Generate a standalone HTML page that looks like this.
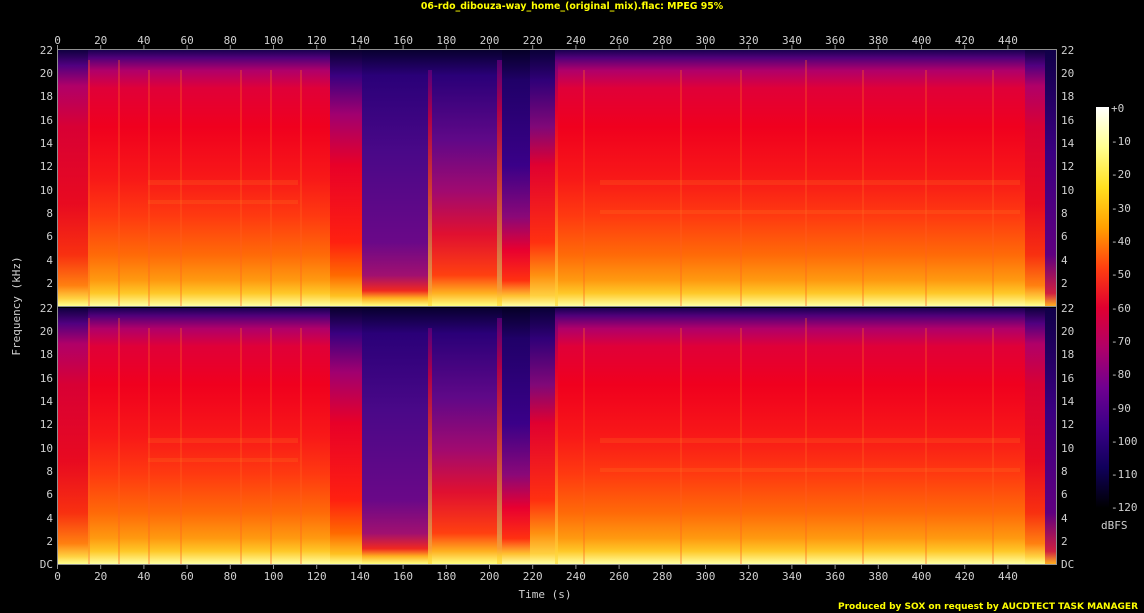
<!DOCTYPE html>
<html><head><meta charset="utf-8"><style>
html,body{margin:0;padding:0;background:#000;width:1144px;height:613px;overflow:hidden}
svg{display:block}
text{font-family:"DejaVu Sans Mono","Liberation Mono",monospace;font-size:11px;fill:#d0d0d0}
</style></head><body>
<svg width="1144" height="613" viewBox="0 0 1144 613" xmlns="http://www.w3.org/2000/svg">
<defs>
<linearGradient id="loud" x1="0" y1="0" x2="0" y2="1">
<stop offset="0" stop-color="#1a0050"/><stop offset="0.03" stop-color="#50007a"/><stop offset="0.08" stop-color="#b0006a"/><stop offset="0.15" stop-color="#e00038"/><stop offset="0.3" stop-color="#f0001e"/><stop offset="0.5" stop-color="#f81818"/><stop offset="0.65" stop-color="#ff3a10"/><stop offset="0.8" stop-color="#ff6a08"/><stop offset="0.9" stop-color="#ff9a10"/><stop offset="0.95" stop-color="#ffc828"/><stop offset="1" stop-color="#ffffa0"/>
</linearGradient>
<linearGradient id="loudA" x1="0" y1="0" x2="0" y2="1">
<stop offset="0" stop-color="#100040"/><stop offset="0.06" stop-color="#500080"/><stop offset="0.14" stop-color="#b00068"/><stop offset="0.3" stop-color="#d80034"/><stop offset="0.6" stop-color="#e80a20"/><stop offset="0.8" stop-color="#f83010"/><stop offset="0.92" stop-color="#ff8010"/><stop offset="0.97" stop-color="#ffd040"/><stop offset="1" stop-color="#ffff90"/>
</linearGradient>
<linearGradient id="trans" x1="0" y1="0" x2="0" y2="1">
<stop offset="0" stop-color="#0a0030"/><stop offset="0.1" stop-color="#3a0080"/><stop offset="0.25" stop-color="#a00070"/><stop offset="0.45" stop-color="#e80028"/><stop offset="0.75" stop-color="#ff2010"/><stop offset="0.88" stop-color="#ff6a00"/><stop offset="0.96" stop-color="#ffc020"/><stop offset="1" stop-color="#ffff90"/>
</linearGradient>
<linearGradient id="quiet" x1="0" y1="0" x2="0" y2="1">
<stop offset="0" stop-color="#080030"/><stop offset="0.1" stop-color="#2a0078"/><stop offset="0.4" stop-color="#4a0888"/><stop offset="0.75" stop-color="#6a0888"/><stop offset="0.88" stop-color="#a01070"/><stop offset="0.94" stop-color="#f02820"/><stop offset="0.97" stop-color="#ffb020"/><stop offset="1" stop-color="#ffff80"/>
</linearGradient>
<linearGradient id="quiet2" x1="0" y1="0" x2="0" y2="1">
<stop offset="0" stop-color="#080030"/><stop offset="0.1" stop-color="#2a0078"/><stop offset="0.35" stop-color="#600888"/><stop offset="0.55" stop-color="#a00a70"/><stop offset="0.72" stop-color="#e01030"/><stop offset="0.88" stop-color="#ff4010"/><stop offset="0.95" stop-color="#ffb020"/><stop offset="1" stop-color="#ffff80"/>
</linearGradient>
<linearGradient id="hole1" x1="0" y1="0" x2="0" y2="1">
<stop offset="0" stop-color="#060028"/><stop offset="0.12" stop-color="#200068"/><stop offset="0.45" stop-color="#3a0088"/><stop offset="0.65" stop-color="#8a0878"/><stop offset="0.78" stop-color="#e80030"/><stop offset="0.9" stop-color="#ff3010"/><stop offset="0.96" stop-color="#ffc030"/><stop offset="1" stop-color="#ffffa0"/>
</linearGradient>
<linearGradient id="hole2" x1="0" y1="0" x2="0" y2="1">
<stop offset="0" stop-color="#0a0038"/><stop offset="0.12" stop-color="#300078"/><stop offset="0.3" stop-color="#800878"/><stop offset="0.45" stop-color="#e00030"/><stop offset="0.75" stop-color="#ff3010"/><stop offset="0.88" stop-color="#ff9010"/><stop offset="0.96" stop-color="#ffd040"/><stop offset="1" stop-color="#ffffa0"/>
</linearGradient>
<linearGradient id="line" x1="0" y1="0" x2="0" y2="1">
<stop offset="0" stop-color="#6a0080"/><stop offset="0.2" stop-color="#e00030"/><stop offset="0.5" stop-color="#ff5010"/><stop offset="1" stop-color="#ffe040"/>
</linearGradient>
<linearGradient id="tail" x1="0" y1="0" x2="0" y2="1">
<stop offset="0" stop-color="#100048"/><stop offset="0.4" stop-color="#3a0080"/><stop offset="0.8" stop-color="#600080"/><stop offset="0.95" stop-color="#d02040"/><stop offset="1" stop-color="#ffb020"/>
</linearGradient>
<linearGradient id="cbar" x1="0" y1="0" x2="0" y2="1">
<stop offset="0" stop-color="#ffffff"/><stop offset="0.1" stop-color="#ffff90"/><stop offset="0.2" stop-color="#ffe020"/><stop offset="0.3" stop-color="#ffa000"/><stop offset="0.4" stop-color="#ff4010"/><stop offset="0.5" stop-color="#e00030"/><stop offset="0.6" stop-color="#b00068"/><stop offset="0.7" stop-color="#700090"/><stop offset="0.8" stop-color="#3a0088"/><stop offset="0.9" stop-color="#10005a"/><stop offset="1" stop-color="#000000"/>
</linearGradient>
<g id="panel">
<rect x="362" y="0" width="140" height="256" fill="url(#quiet)"/>
<rect x="58" y="0" width="30" height="256" fill="url(#loudA)"/>
<rect x="88" y="0" width="242" height="256" fill="url(#loud)"/>
<rect x="330" y="0" width="32" height="256" fill="url(#trans)"/>
<rect x="362" y="0" width="66" height="256" fill="url(#quiet)"/>
<rect x="432" y="0" width="65" height="256" fill="url(#quiet2)"/>
<rect x="502" y="0" width="28" height="256" fill="url(#hole1)"/>
<rect x="530" y="0" width="25" height="256" fill="url(#hole2)"/>
<rect x="555" y="0" width="470" height="256" fill="url(#loud)"/>
<rect x="1025" y="0" width="20" height="256" fill="url(#loudA)"/>
<rect x="1045" y="0" width="11" height="256" fill="url(#tail)"/>
<g fill="url(#line)" opacity="0.7">
<rect x="428" y="20" width="4" height="236"/><rect x="497" y="10" width="5" height="246"/>
<rect x="555" y="12" width="3" height="244"/>
</g>
<g fill="#ff6020" opacity="0.35">
<rect x="88" y="10" width="2" height="246"/><rect x="118" y="10" width="2" height="246"/><rect x="148" y="20" width="2" height="236"/><rect x="180" y="20" width="2" height="236"/><rect x="240" y="20" width="2" height="236"/><rect x="270" y="20" width="2" height="236"/><rect x="300" y="20" width="2" height="236"/>
<rect x="583" y="20" width="2" height="236"/><rect x="680" y="20" width="2" height="236"/><rect x="740" y="20" width="2" height="236"/><rect x="805" y="10" width="2" height="246"/><rect x="862" y="20" width="2" height="236"/><rect x="925" y="20" width="2" height="236"/><rect x="992" y="20" width="2" height="236"/>
</g>
<g fill="#ff8020" opacity="0.2">
<rect x="148" y="130" width="150" height="5"/><rect x="148" y="150" width="150" height="4"/><rect x="600" y="130" width="420" height="5"/><rect x="600" y="160" width="420" height="4"/>
</g>
</g>
</defs>
<text x="572" y="9" text-anchor="middle" style="font-family:'DejaVu Sans','Liberation Sans',sans-serif;font-size:9.4px;font-weight:bold;fill:#ffff00">06-rdo_dibouza-way_home_(original_mix).flac: MPEG 95%</text>
<use href="#panel" transform="translate(0,50)"/>
<use href="#panel" transform="translate(0,308)"/>
<rect x="57.5" y="49.5" width="999" height="515" fill="none" stroke="#909090" stroke-width="1"/>
<line x1="57.5" y1="306.5" x2="1056.5" y2="306.5" stroke="#909090"/>
<g stroke="#909090">
<path d="M57.5 45v4M100.7 45v4M143.9 45v4M187.1 45v4M230.3 45v4M273.5 45v4M316.7 45v4M359.9 45v4M403.1 45v4M446.3 45v4M489.5 45v4M532.7 45v4M575.9 45v4M619.1 45v4M662.3 45v4M705.5 45v4M748.7 45v4M791.9 45v4M835.1 45v4M878.3 45v4M921.5 45v4M964.7 45v4M1007.9 45v4"/>
<path d="M57.5 565v4M100.7 565v4M143.9 565v4M187.1 565v4M230.3 565v4M273.5 565v4M316.7 565v4M359.9 565v4M403.1 565v4M446.3 565v4M489.5 565v4M532.7 565v4M575.9 565v4M619.1 565v4M662.3 565v4M705.5 565v4M748.7 565v4M791.9 565v4M835.1 565v4M878.3 565v4M921.5 565v4M964.7 565v4M1007.9 565v4"/>
</g>
<g text-anchor="middle">
<text x="57.5" y="44">0</text><text x="100.7" y="44">20</text><text x="143.9" y="44">40</text><text x="187.1" y="44">60</text><text x="230.3" y="44">80</text><text x="273.5" y="44">100</text><text x="316.7" y="44">120</text><text x="359.9" y="44">140</text><text x="403.1" y="44">160</text><text x="446.3" y="44">180</text><text x="489.5" y="44">200</text><text x="532.7" y="44">220</text><text x="575.9" y="44">240</text><text x="619.1" y="44">260</text><text x="662.3" y="44">280</text><text x="705.5" y="44">300</text><text x="748.7" y="44">320</text><text x="791.9" y="44">340</text><text x="835.1" y="44">360</text><text x="878.3" y="44">380</text><text x="921.5" y="44">400</text><text x="964.7" y="44">420</text><text x="1007.9" y="44">440</text>
<text x="57.5" y="580">0</text><text x="100.7" y="580">20</text><text x="143.9" y="580">40</text><text x="187.1" y="580">60</text><text x="230.3" y="580">80</text><text x="273.5" y="580">100</text><text x="316.7" y="580">120</text><text x="359.9" y="580">140</text><text x="403.1" y="580">160</text><text x="446.3" y="580">180</text><text x="489.5" y="580">200</text><text x="532.7" y="580">220</text><text x="575.9" y="580">240</text><text x="619.1" y="580">260</text><text x="662.3" y="580">280</text><text x="705.5" y="580">300</text><text x="748.7" y="580">320</text><text x="791.9" y="580">340</text><text x="835.1" y="580">360</text><text x="878.3" y="580">380</text><text x="921.5" y="580">400</text><text x="964.7" y="580">420</text><text x="1007.9" y="580">440</text>
<text x="545" y="598">Time (s)</text>
</g>
<g text-anchor="end">
<text x="53" y="54">22</text><text x="53" y="77">20</text><text x="53" y="100">18</text><text x="53" y="124">16</text><text x="53" y="147">14</text><text x="53" y="170">12</text><text x="53" y="194">10</text><text x="53" y="217">8</text><text x="53" y="240">6</text><text x="53" y="264">4</text><text x="53" y="287">2</text>
<text x="53" y="312">22</text><text x="53" y="335">20</text><text x="53" y="358">18</text><text x="53" y="382">16</text><text x="53" y="405">14</text><text x="53" y="428">12</text><text x="53" y="452">10</text><text x="53" y="475">8</text><text x="53" y="498">6</text><text x="53" y="522">4</text><text x="53" y="545">2</text><text x="53" y="568">DC</text>
</g>
<g>
<text x="1061" y="54">22</text><text x="1061" y="77">20</text><text x="1061" y="100">18</text><text x="1061" y="124">16</text><text x="1061" y="147">14</text><text x="1061" y="170">12</text><text x="1061" y="194">10</text><text x="1061" y="217">8</text><text x="1061" y="240">6</text><text x="1061" y="264">4</text><text x="1061" y="287">2</text>
<text x="1061" y="312">22</text><text x="1061" y="335">20</text><text x="1061" y="358">18</text><text x="1061" y="382">16</text><text x="1061" y="405">14</text><text x="1061" y="428">12</text><text x="1061" y="452">10</text><text x="1061" y="475">8</text><text x="1061" y="498">6</text><text x="1061" y="522">4</text><text x="1061" y="545">2</text><text x="1061" y="568">DC</text>
</g>
<text transform="translate(20,306) rotate(-90)" text-anchor="middle">Frequency (kHz)</text>
<rect x="1096" y="107" width="13" height="401" fill="url(#cbar)"/>
<g>
<text x="1111" y="112">+0</text><text x="1111" y="145">-10</text><text x="1111" y="178">-20</text><text x="1111" y="212">-30</text><text x="1111" y="245">-40</text><text x="1111" y="278">-50</text><text x="1111" y="312">-60</text><text x="1111" y="345">-70</text><text x="1111" y="378">-80</text><text x="1111" y="412">-90</text><text x="1111" y="445">-100</text><text x="1111" y="478">-110</text><text x="1111" y="511">-120</text>
<text x="1101" y="529">dBFS</text>
</g>
<text x="1138" y="609" text-anchor="end" style="font-family:'DejaVu Sans','Liberation Sans',sans-serif;font-size:9px;font-weight:bold;fill:#ffff00">Produced by SOX on request by AUCDTECT TASK MANAGER</text>
</svg>
</body></html>
